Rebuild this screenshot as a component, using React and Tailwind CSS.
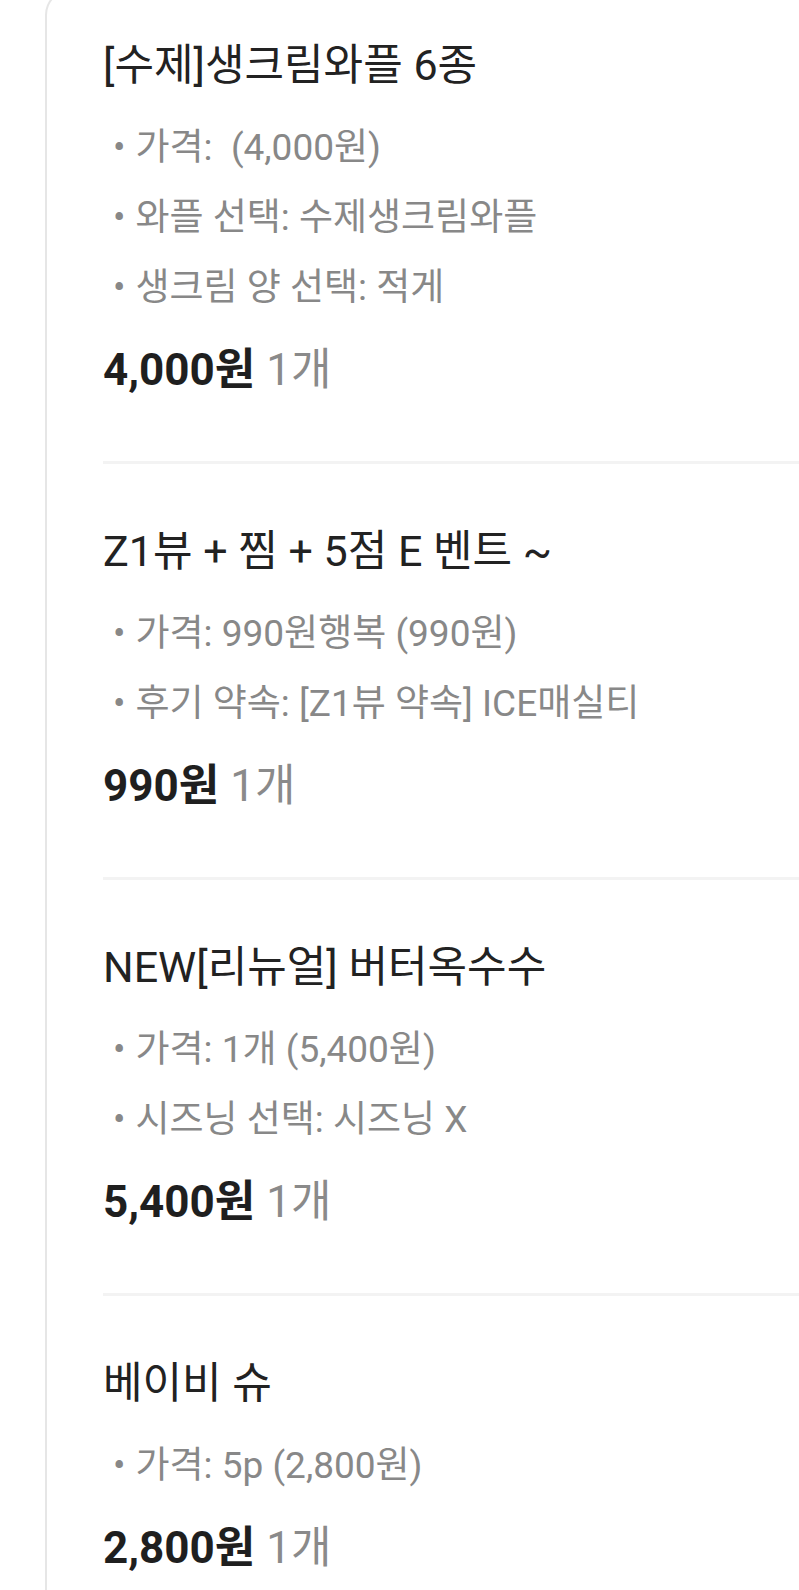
const items = [
  {
    name: '[수제]생크림와플 6종',
    options: ['가격:  (4,000원)', '와플 선택: 수제생크림와플', '생크림 양 선택: 적게'],
    price: '4,000원',
    qty: '1개',
  },
  {
    name: 'Z1뷰 + 찜 + 5점 E 벤트 ~',
    options: ['가격: 990원행복 (990원)', '후기 약속: [Z1뷰 약속] ICE매실티'],
    price: '990원',
    qty: '1개',
  },
  {
    name: 'NEW[리뉴얼] 버터옥수수',
    options: ['가격: 1개 (5,400원)', '시즈닝 선택: 시즈닝 X'],
    price: '5,400원',
    qty: '1개',
  },
  {
    name: '베이비 슈',
    options: ['가격: 5p (2,800원)'],
    price: '2,800원',
    qty: '1개',
  },
];

const OrderItem = ({ item, first, last }) => (
  <div>
    <div className={`pr-4 ${first ? '' : 'pt-[59px]'} ${last ? 'pb-[40px]' : 'pb-[63px]'}`}>
      <h3 className="text-[43px] leading-[56px] text-[#222222] whitespace-pre">{item.name}</h3>
      <ul className="mt-[20px]">
        {item.options.map((opt, i) => (
          <li key={i} className="flex items-center h-[70px] text-[37px] text-[#888888] whitespace-pre">
            <span className="ml-[10px] mr-[10px]">•</span>
            <span>{opt}</span>
          </li>
        ))}
      </ul>
      <div className="mt-[19px] h-[56px] flex items-center text-[44px]">
        <span className="font-bold text-[#1f1f1f]">{item.price}</span>
        <span className="ml-[11px] text-[#8a8a8a]">{item.qty}</span>
      </div>
    </div>
    {!last && <div className="h-[3px] bg-[#f3f3f3]"></div>}
  </div>
);

export default function App() {
  return (
    <div
      className="w-[799px] h-[1590px] overflow-hidden bg-white pl-[45px]"
      style={{ fontFamily: 'Roboto, "Noto Sans CJK KR", sans-serif' }}
    >
      <div className="-mt-[11px] w-[780px] min-h-[1620px] border-l-2 border-t-2 border-[#e6e6e6] rounded-tl-[26px] bg-white pl-[56px] pt-[46px]">
        {items.map((item, i) => (
          <OrderItem key={i} item={item} first={i === 0} last={i === items.length - 1} />
        ))}
      </div>
    </div>
  );
}
